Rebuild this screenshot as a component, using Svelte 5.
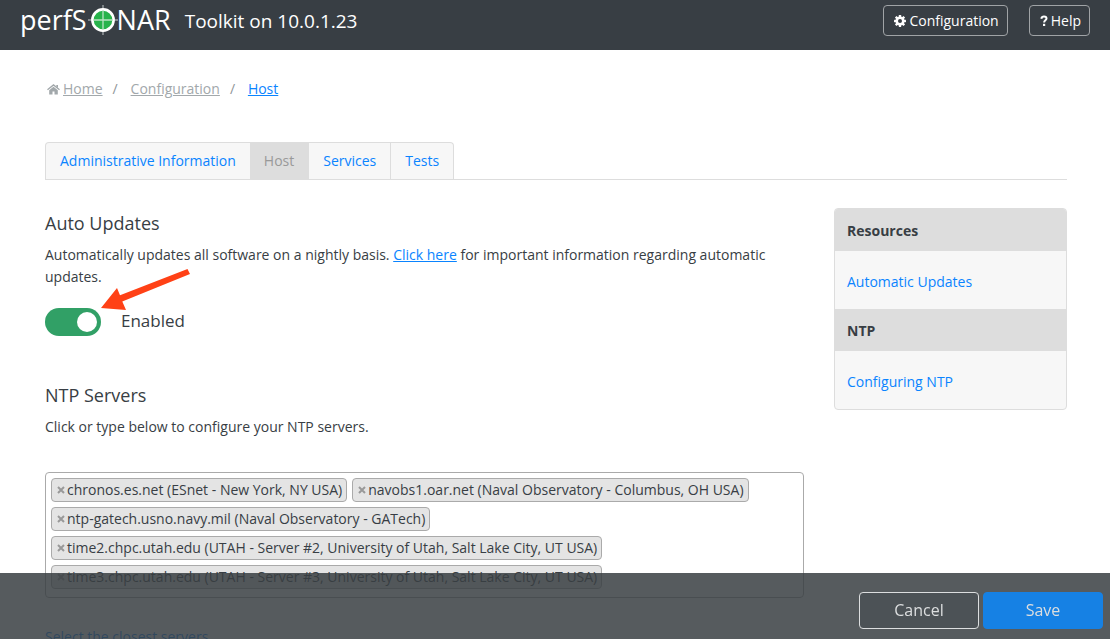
<script>
  let enabled = $state(true);

  const tabs = ['Administrative Information', 'Host', 'Services', 'Tests'];
  const current = 'Host';

  let servers = $state([
    'chronos.es.net (ESnet - New York, NY USA)',
    'navobs1.oar.net (Naval Observatory - Columbus, OH USA)',
    'ntp-gatech.usno.navy.mil (Naval Observatory - GATech)',
    'time2.chpc.utah.edu (UTAH - Server #2, University of Utah, Salt Lake City, UT USA)',
    'time3.chpc.utah.edu (UTAH - Server #3, University of Utah, Salt Lake City, UT USA)'
  ]);

  const resources = [
    { title: 'Resources', link: 'Automatic Updates' },
    { title: 'NTP', link: 'Configuring NTP' }
  ];

  function remove(name) {
    servers = servers.filter((s) => s !== name);
  }
</script>

<div class="app">
  <header class="topbar">
    <a class="logo" href="#home">
      <span>perfS</span>
      <svg width="30" height="30" viewBox="0 0 30 30" aria-hidden="true">
        <path d="M15 0V30M0 15H30" stroke="#9ba0a3" stroke-width="1.4" />
        <circle cx="15" cy="15" r="10.6" fill="#27b34b" stroke="#fff" stroke-width="2.6" />
        <path d="M15 5.500V24.500M5.500 15H24.500" stroke="#b9e3c2" stroke-width="1.3" />
      </svg>
      <span>NAR</span>
    </a>
    <h1>Toolkit on 10.0.1.23</h1>
    <nav class="actions">
      <button type="button">
        <svg width="12" height="12" viewBox="0 0 12 12" aria-hidden="true">
          <g fill="#fff">
            <rect x="4.800" y="0" width="2.400" height="12" rx=".4" />
            <rect x="4.800" y="0" width="2.400" height="12" rx=".4" transform="rotate(45 6 6)" />
            <rect x="4.800" y="0" width="2.400" height="12" rx=".4" transform="rotate(90 6 6)" />
            <rect x="4.800" y="0" width="2.400" height="12" rx=".4" transform="rotate(135 6 6)" />
            <circle cx="6" cy="6" r="4.500" />
          </g>
          <circle cx="6" cy="6" r="2" fill="#383e44" />
        </svg>
        Configuration
      </button>
      <button type="button">
        <svg width="8" height="12" viewBox="0 0 8 12" aria-hidden="true">
          <path d="M1.300 3.700C1.700 2 2.700 1.600 4 1.600C5.600 1.600 6.500 2.400 6.500 3.500C6.500 5.300 4.100 5.300 4.100 7.500" fill="none" stroke="#fff" stroke-width="2" />
          <rect x="3" y="8.800" width="2.200" height="2.200" fill="#fff" />
        </svg>
        Help
      </button>
    </nav>
  </header>

  <main>
    <nav class="crumbs" aria-label="Breadcrumb">
      <svg width="13" height="11" viewBox="0 0 13 11" aria-hidden="true">
        <path d="M.5 5.800L6.500.9L12.500 5.800" fill="none" stroke="#a2a8ab" stroke-width="1.300" />
        <path d="M9.300.9H11V4L9.300 2.600ZM2.200 6.300L6.500 2.800L10.800 6.300V10.500H7.500V7.400H5.500V10.500H2.200Z" fill="#a2a8ab" />
      </svg>
      <a href="#home">Home</a>
      <span class="slash">/</span>
      <a href="#configuration">Configuration</a>
      <span class="slash">/</span>
      <a class="here" href="#host">Host</a>
    </nav>

    <nav class="tabs">
      <ul>
        {#each tabs as tab}
          <li class:current={tab === current}><a href="#tab">{tab}</a></li>
        {/each}
      </ul>
    </nav>

    <div class="columns">
      <div class="settings">
        <section>
          <h2>Auto Updates</h2>
          <p>
            Automatically updates all software on a nightly basis. <a href="#info">Click here</a> for important
            information regarding automatic updates.
          </p>
          <div class="toggle-row">
            <label class="toggle">
              <input type="checkbox" role="switch" bind:checked={enabled} />
              <span>{enabled ? 'Enabled' : 'Disabled'}</span>
            </label>
            <svg class="arrow" width="90" height="42" viewBox="0 0 90 42" aria-hidden="true">
              <path d="M0 39L16 19L19 26.200L86.500 0L89 5L21.300 32.400L25 41Z" fill="#ff4116" />
            </svg>
          </div>
        </section>

        <section class="ntp">
          <h2>NTP Servers</h2>
          <p>Click or type below to configure your NTP servers.</p>
          <ul class="chips">
            {#each servers as server (server)}
              <li>
                <button type="button" aria-label="Remove {server}" onclick={() => remove(server)}>
                  <svg width="8" height="8" viewBox="0 0 8 8" aria-hidden="true">
                    <path d="M1 1L7 7M7 1L1 7" stroke="#999" stroke-width="2" />
                  </svg>
                </button>
                <span>{server}</span>
              </li>
            {/each}
          </ul>
          <a class="closest" href="#closest">Select the closest servers</a>
        </section>
      </div>

      <aside>
        {#each resources as group}
          <h3>{group.title}</h3>
          <div class="links"><a href="#resource">{group.link}</a></div>
        {/each}
      </aside>
    </div>
  </main>

  <footer>
    <button type="button" class="cancel">Cancel</button>
    <button type="button" class="save">Save</button>
  </footer>
</div>

<style>
  :global(body) {
    margin: 0;
  }
  .app {
    height: 100vh;
    display: flex;
    flex-direction: column;
    background: #fff;
    color: #383e44;
    font: 14px/22px 'Open Sans', sans-serif;
  }
  .app * {
    box-sizing: border-box;
  }
  h1, h2, h3, p, ul {
    margin: 0;
    padding: 0;
    font-weight: 400;
  }
  ul {
    list-style: none;
  }
  a {
    color: #0a84ff;
    text-decoration: none;
  }
  button {
    font: inherit;
    cursor: pointer;
  }
  .topbar {
    flex: none;
    display: flex;
    align-items: center;
    height: 50px;
    padding: 0 20px 9px;
    background: #383e44;
    color: #fff;
  }
  .logo {
    display: flex;
    align-items: center;
    padding-bottom: 2px;
    color: #fff;
    font: 500 27px/38px 'Open Sans', sans-serif;
  }
  .logo svg {
    margin: 0 -1px 0 1px;
  }
  h1 {
    margin-left: 14px;
    font-size: 19px;
  }
  .actions {
    display: flex;
    gap: 21px;
    margin-left: auto;
  }
  .actions button {
    display: flex;
    align-items: center;
    gap: 3px;
    height: 31px;
    padding: 0 8px 0 10px;
    border: 1px solid #a0a3a6;
    border-radius: 4px;
    background: none;
    color: #fff;
  }
  main {
    flex: 1;
    min-height: 0;
    overflow-y: auto;
    scrollbar-width: none;
    padding: 28px 43px 0 45px;
  }
  .crumbs {
    display: flex;
    align-items: center;
    padding-left: 2px;
  }
  .crumbs a {
    color: #a2a8ab;
    text-decoration: underline;
  }
  .crumbs svg {
    margin-right: 3px;
  }
  .crumbs a.here {
    color: #0a84ff;
  }
  .slash {
    width: 28px;
    padding-left: 10px;
    color: #8f9598;
  }
  .tabs {
    margin-top: 42px;
    border-bottom: 1px solid #ddd;
  }
  .tabs ul {
    display: flex;
    width: max-content;
    border: 1px solid #ddd;
    border-bottom: 0;
    border-radius: 4px 4px 0 0;
    background: #f7f7f7;
  }
  .tabs li + li:not(.current) {
    border-left: 1px solid #ddd;
  }
  .tabs a {
    display: block;
    padding: 7px 14px;
  }
  .tabs .current a {
    background: #ddd;
    color: #999;
  }
  .columns {
    display: grid;
    grid-template-columns: minmax(0, 1fr) 233px;
    align-items: start;
    gap: 30px;
    padding-top: 28px;
  }
  h2 {
    padding: 4px 0;
    margin-bottom: 6px;
    font-size: 18px;
    line-height: 22px;
  }
  .settings p a {
    text-decoration: underline;
  }
  .toggle-row {
    position: relative;
    margin-top: 20px;
  }
  .toggle {
    display: flex;
    align-items: center;
    gap: 20px;
    font-size: 17px;
  }
  .toggle span {
    padding-bottom: 2px;
  }
  .toggle input {
    appearance: none;
    width: 56px;
    height: 28px;
    margin: 0;
    padding: 4px;
    border-radius: 14px;
    background: #aaa;
    display: flex;
  }
  .toggle input::before {
    content: '';
    width: 20px;
    height: 20px;
    border-radius: 50%;
    background: #fff;
  }
  .toggle input:checked {
    justify-content: flex-end;
    background: #31a066;
  }
  .arrow {
    position: absolute;
    left: 56px;
    top: -39px;
  }
  .ntp {
    margin-top: 44px;
  }
  .chips {
    display: flex;
    flex-wrap: wrap;
    gap: 5px;
    margin-top: 34px;
    padding: 5px 5px 8px;
    border: 1px solid #aaa;
    border-radius: 4px;
  }
  .chips li {
    display: flex;
    align-items: center;
    padding: 0 4px 0 5px;
    border: 1px solid #aaa;
    border-radius: 4px;
    background: #e4e4e4;
  }
  .chips button {
    display: flex;
    margin-right: 2px;
    padding: 0;
    border: 0;
    background: none;
  }
  .closest {
    display: inline-block;
    margin-top: 28px;
  }
  aside {
    overflow: hidden;
    border: 1px solid #ddd;
    border-radius: 4px;
    background: #f7f7f7;
  }
  aside h3 {
    padding: 11px 12px 9px;
    background: #ddd;
    font-size: 14px;
    font-weight: 700;
  }
  .links {
    padding: 20px 12px 16px;
  }
  footer {
    position: fixed;
    inset: auto 0 0;
    display: flex;
    justify-content: flex-end;
    gap: 4px;
    padding: 19px 7px 10px;
    background: rgba(56, 62, 66, 0.85);
  }
  footer button {
    width: 120px;
    height: 37px;
    padding: 0 0 2px;
    border: 1px solid #dcdedf;
    border-radius: 4px;
    background: #4c5256;
    color: #dcdedf;
    font-size: 16px;
  }
  footer .save {
    border-color: #1681e4;
    background: #1681e4;
  }
</style>
